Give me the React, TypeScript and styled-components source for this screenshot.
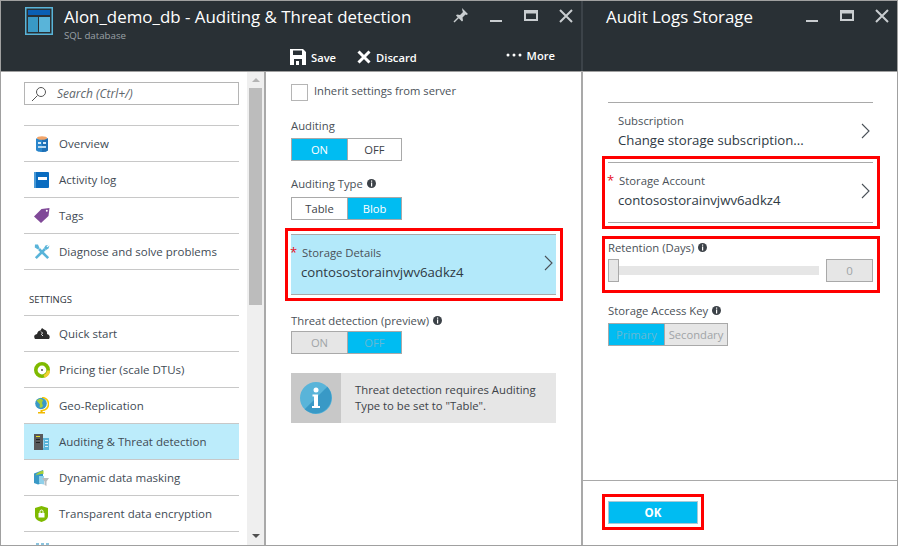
import styled, { createGlobalStyle } from "styled-components"
import type { ReactNode } from "react"

const Global = createGlobalStyle`
html, body { margin: 0; padding: 0; background: #fff; }
* { box-sizing: border-box; }
body { font-family: "Open Sans", "Noto Sans", sans-serif; color: #3c4248; }
`

function SqlIcon() {
  return (
    <svg width="12" height="16" viewBox="0 0 12 16">
      <path d="M0 2.500h12v11.500c0 1-3 2-6 2s-6-1-6-2z" fill="#2a86cc" />
      <path d="M6 2.500h6v11.500c0 1-3 2-6 2z" fill="#1e6fb5" />
      <ellipse cx="6" cy="2" rx="5" ry="1.800" fill="#f2a468" />
      <rect x="2" y="6" width="3" height="2" fill="#d5e8f6" />
      <rect x="7" y="6" width="3" height="2" fill="#d5e8f6" />
      <rect x="2" y="10" width="8" height="2" fill="#b8d8ef" />
    </svg>
  )
}
function LogIcon() {
  return (
    <svg width="15" height="16" viewBox="0 0 15 16">
      <rect width="15" height="16" rx="1" fill="#0a6cc0" />
      <rect width="2" height="16" fill="#4a9ad6" />
      <rect x="4" y="5" width="9" height="3" fill="#fff" />
    </svg>
  )
}
function TagIcon() {
  return (
    <svg width="16" height="15" viewBox="0 0 16 15">
      <path d="M0 8.500 7.500 1 15.500 0 14.500 8 7 15z" fill="#804998" />
      <circle cx="12.800" cy="2.700" r="1" fill="#fff" />
    </svg>
  )
}
function ToolsIcon() {
  return (
    <svg width="16" height="16" viewBox="0 0 16 16">
      <path d="M1.800 14.200 11 5" stroke="#59b4d9" strokeWidth="2.600" />
      <path d="M14.500 0.800 11.500 1.500 10 4l2 2 2.500-1.500 1-3-2 1.800-1-1z" fill="#59b4d9" />
      <path d="M14.200 14.200 5 5" stroke="#59b4d9" strokeWidth="2.600" />
      <path d="M1 0.500 4 0.500 5.500 4 4 5.500 0.800 3.500z" fill="#59b4d9" />
    </svg>
  )
}
function CloudIcon() {
  return (
    <svg width="16" height="11" viewBox="0 0 16 11">
      <path d="M1 11C-0.500 9 0 6.500 3 6 3.500 3.500 5 2.500 6.500 2.500L8 0l2 1.500L12 2.500c1 1 1.200 2.500 1 3.500 2.500 0.500 3.500 3 2 5z" fill="#2b2b2b" />
      <path d="M7 3.500 8.500 5 7.500 6.500 9 8" stroke="#fff" strokeWidth="0.900" fill="none" />
    </svg>
  )
}
function PricingIcon() {
  return (
    <svg width="16" height="16" viewBox="0 0 16 16">
      <circle cx="8" cy="8" r="6.200" fill="#fff" stroke="#7fba00" strokeWidth="3.600" />
      <path d="M14.500 8.500A6.500 6.500 0 0 1 10 14.200" fill="none" stroke="#f0d030" strokeWidth="3.200" />
      <circle cx="8" cy="8" r="1" fill="#555" />
    </svg>
  )
}
function GlobeIcon() {
  return (
    <svg width="15" height="17" viewBox="0 0 15 17">
      <path d="M8 0.500a6.500 6.500 0 0 1 0 13" fill="none" stroke="#f8c800" strokeWidth="1.500" />
      <circle cx="7" cy="6.500" r="5.800" fill="#3999c6" />
      <path d="M2.500 3.500 6 1.500 9 3 8 6l1 3-2 2-1.500-1L6 7.500z" fill="#a5ce3a" />
      <rect x="6.500" y="13" width="2" height="2" fill="#f0b800" />
      <rect x="4" y="15" width="7" height="1.500" fill="#f0b800" />
    </svg>
  )
}
function AuditIcon() {
  return (
    <svg width="15" height="16" viewBox="0 0 15 16">
      <rect x="6" y="4" width="9" height="12" fill="#59b4d9" />
      <rect width="9" height="16" fill="#58595b" />
      <rect x="2" y="2" width="4" height="1" fill="#e8e020" />
      <rect x="2" y="5" width="4" height="1" fill="#222" />
      <rect x="2" y="8" width="4" height="1" fill="#222" />
      <rect x="9" y="6" width="1" height="8" fill="#8fd0ea" />
      <rect x="11" y="6" width="3" height="1" fill="#d8f0fa" />
      <rect x="11" y="9" width="3" height="1" fill="#d8f0fa" />
      <rect x="11" y="12" width="3" height="1" fill="#d8f0fa" />
    </svg>
  )
}
function MaskIcon() {
  return (
    <svg width="15" height="16" viewBox="0 0 15 16">
      <path d="M0 3.500 9 0v13l-5 1.500L0 13z" fill="#3999c6" />
      <path d="M1.500 5.500C3 3 5.500 1.500 9.500 0.500v3.500C6 4 3.500 4.500 1.500 5.500z" fill="#a5ce3a" />
      <path d="M5 6h5v8.500l-5-1z" fill="#8fd0ea" />
      <path d="M8 8h7l-2.500 3.500V16L10.500 15V11.500z" fill="#b8bcbf" />
    </svg>
  )
}
function ShieldIcon() {
  return (
    <svg width="13" height="16" viewBox="0 0 13 16">
      <path d="M0 2 6.500 0 13 2v8c0 3-3 5-6.500 6C3 15 0 13 0 10z" fill="#7fba00" />
      <rect x="3.500" y="7" width="6" height="4.500" fill="#fff" />
      <path d="M5 7V5.500a1.500 1.500 0 0 1 3 0V7" fill="none" stroke="#fff" />
    </svg>
  )
}
function MoreIcon() {
  return (
    <svg width="14" height="14" viewBox="0 0 14 14">
      <rect x="1" y="0" width="3" height="2" fill="#8cc4de" />
      <rect x="6" y="0" width="3" height="2" fill="#8cc4de" />
      <rect x="11" y="0" width="3" height="2" fill="#8cc4de" />
    </svg>
  )
}

type MenuEntry = { label: string; icon: ReactNode; active?: boolean }

const topItems: MenuEntry[] = [
  { label: "Overview", icon: <SqlIcon /> },
  { label: "Activity log", icon: <LogIcon /> },
  { label: "Tags", icon: <TagIcon /> },
  { label: "Diagnose and solve problems", icon: <ToolsIcon /> },
]

const settingsItems: MenuEntry[] = [
  { label: "Quick start", icon: <CloudIcon /> },
  { label: "Pricing tier (scale DTUs)", icon: <PricingIcon /> },
  { label: "Geo-Replication", icon: <GlobeIcon /> },
  { label: "Auditing & Threat detection", icon: <AuditIcon />, active: true },
  { label: "Dynamic data masking", icon: <MaskIcon /> },
  { label: "Transparent data encryption", icon: <ShieldIcon /> },
]

function WindowControls({ pin, inset }: { pin?: boolean; inset: number }) {
  return (
    <Controls $inset={inset}>
      {pin && (
        <svg width="20" height="20" viewBox="0 0 20 20">
          <path d="M11 3l6 6-1.500 1-1-.5-3 3 .5 3-1 1-6-6 1-1 3 .5 3-3-.5-1z" fill="#c9cdd0" />
          <path d="M7.500 12.500 3 17" stroke="#c9cdd0" strokeWidth="1.500" />
        </svg>
      )}
      <svg width="20" height="20" viewBox="0 0 20 20">
        <rect x="4" y="15" width="12" height="2" fill="#c9cdd0" />
      </svg>
      <svg width="20" height="20" viewBox="0 0 20 20">
        <path d="M3 5h14v11H3z M5 8.500v5.500h10V8.500z" fill="#c9cdd0" fillRule="evenodd" />
      </svg>
      <svg width="20" height="20" viewBox="0 0 20 20">
        <path d="M4 5l12 12M16 5 4 17" stroke="#c9cdd0" strokeWidth="2" />
      </svg>
    </Controls>
  )
}

function Chevron() {
  return (
    <ChevronBox>
      <svg width="9" height="16" viewBox="0 0 9 16">
        <path d="M1 1l7 7-7 7" fill="none" stroke="#4a5158" strokeWidth="1.100" />
      </svg>
    </ChevronBox>
  )
}

function InfoDot() {
  return (
    <DotBox>
      <svg width="9" height="9" viewBox="0 0 9 9">
        <circle cx="4.500" cy="4.500" r="4.500" fill="#3c4248" />
        <rect x="4" y="1.500" width="1.200" height="1.200" fill="#fff" />
        <rect x="4" y="3.500" width="1.200" height="4" fill="#fff" />
      </svg>
    </DotBox>
  )
}

function Segmented({ left, right, on, disabled, width, first }: { left: string; right: string; on: "left" | "right"; disabled?: boolean; width: number; first: number }) {
  return (
    <Toggle $width={width} $first={first}>
      <Segment $on={on === "left"} $disabled={disabled}>{left}</Segment>
      <Segment $on={on === "right"} $disabled={disabled}>{right}</Segment>
    </Toggle>
  )
}

function App() {
  return (
    <>
      <Global />
      <Frame>
        <Blade $width={580}>
          <Header>
            <TitleRow>
              <Logo>
                <svg width="28" height="28" viewBox="0 0 28 28">
                  <rect x="0.750" y="0.750" width="26.500" height="26.500" fill="none" stroke="#59b4d9" strokeWidth="1.500" />
                  <rect x="3" y="3" width="22" height="5" fill="#0a5fb4" />
                  <rect x="3" y="10" width="10" height="15" fill="#3999c6" />
                  <rect x="14" y="10" width="11" height="15" fill="#59b4d9" />
                </svg>
              </Logo>
              <TitleText>
                <Title>Alon_demo_db - Auditing &amp; Threat detection</Title>
                <Subtitle>SQL database</Subtitle>
              </TitleText>
              <WindowControls pin inset={5} />
            </TitleRow>
            <Toolbar>
              <ToolButton>
                <svg width="16" height="16" viewBox="0 0 16 16">
                  <path d="M0 0h13l3 3v13H0z M3 1.500V6h9V1.500z M4 10v6h2v-4h3v4h3v-6z" fill="#fff" fillRule="evenodd" />
                </svg>
                Save
              </ToolButton>
              <ToolButton>
                <svg width="14" height="14" viewBox="0 0 14 14">
                  <path d="M1.500 1.500l11 11M12.500 1.500l-11 11" stroke="#fff" strokeWidth="3" />
                </svg>
                Discard
              </ToolButton>
              <MoreButton>
                <svg width="16" height="4" viewBox="0 0 16 4">
                  <circle cx="2" cy="2" r="1.500" fill="#fff" />
                  <circle cx="8" cy="2" r="1.500" fill="#fff" />
                  <circle cx="14" cy="2" r="1.500" fill="#fff" />
                </svg>
                More
              </MoreButton>
            </Toolbar>
          </Header>
          <BladeBody>
            <Menu>
              <SearchBox>
                <svg width="16" height="16" viewBox="0 0 16 16">
                  <circle cx="10" cy="6" r="4.500" fill="none" stroke="#555" />
                  <path d="M6.500 9.500 1 15" stroke="#555" />
                </svg>
                Search (Ctrl+/)
              </SearchBox>
              <MenuList>
                {topItems.map((item) => (
                  <MenuRow key={item.label} $active={item.active}>
                    <MenuIcon>{item.icon}</MenuIcon>
                    {item.label}
                  </MenuRow>
                ))}
              </MenuList>
              <SectionLabel>SETTINGS</SectionLabel>
              <MenuList>
                {settingsItems.map((item) => (
                  <MenuRow key={item.label} $active={item.active}>
                    <MenuIcon>{item.icon}</MenuIcon>
                    {item.label}
                  </MenuRow>
                ))}
                <MenuRow>
                  <MenuIcon><MoreIcon /></MenuIcon>
                </MenuRow>
              </MenuList>
            </Menu>
            <Scrollbar>
              <ScrollArrow $down={false} />
              <ScrollThumb />
              <ScrollArrow $down />
            </Scrollbar>
            <Content>
              <CheckRow>
                <CheckBox />
                <CheckText>Inherit settings from server</CheckText>
              </CheckRow>
              <FieldLabel $top={17} $bottom={4}>Auditing</FieldLabel>
              <Segmented left="ON" right="OFF" on="left" width={111} first={55} />
              <FieldLabel $top={15} $bottom={5}>Auditing Type <InfoDot /></FieldLabel>
              <Segmented left="Table" right="Blob" on="right" width={111} first={55} />
              <RedBox $top={8}>
                <LinkRow $tinted>
                  <LinkText>
                    <LinkLabel><Star>*</Star>Storage Details</LinkLabel>
                    <LinkValue>contosostorainvjwv6adkz4</LinkValue>
                  </LinkText>
                  <Chevron />
                </LinkRow>
              </RedBox>
              <FieldLabel $top={12} $bottom={2}>Threat detection (preview) <InfoDot /></FieldLabel>
              <Segmented left="ON" right="OFF" on="right" disabled width={111} first={55} />
              <InfoBox>
                <InfoIconCell>
                  <svg width="32" height="32" viewBox="0 0 32 32">
                    <circle cx="16" cy="16" r="16" fill="#59b4d9" />
                    <path d="M27.300 4.700A16 16 0 0 1 4.700 27.300z" fill="#3999c6" />
                    <circle cx="16" cy="8" r="2.500" fill="#fff" />
                    <path d="M12.500 12.500H18V24h2v2h-8v-2h2V14.500h-1.500z" fill="#fff" />
                  </svg>
                </InfoIconCell>
                <InfoText>Threat detection requires Auditing Type to be set to "Table".</InfoText>
              </InfoBox>
            </Content>
          </BladeBody>
        </Blade>
        <Divider />
        <Blade $width={314}>
          <Header>
            <TitleRow>
              <PlainTitle>Audit Logs Storage</PlainTitle>
              <WindowControls inset={5} />
            </TitleRow>
          </Header>
          <SideBody>
            <SideMain>
              <LinkRow $open>
                <LinkText>
                  <LinkLabel>Subscription</LinkLabel>
                  <LinkValue>Change storage subscription...</LinkValue>
                </LinkText>
                <Chevron />
              </LinkRow>
              <RedBox $top={0}>
                <LinkRow>
                  <LinkText>
                    <LinkLabel><Star>*</Star>Storage Account</LinkLabel>
                    <LinkValue>contosostorainvjwv6adkz4</LinkValue>
                  </LinkText>
                  <Chevron />
                </LinkRow>
              </RedBox>
              <RedBox $top={7}>
                <RetentionLabel>Retention (Days) <InfoDot /></RetentionLabel>
                <SliderRow>
                  <SliderTrack>
                    <SliderThumb />
                  </SliderTrack>
                  <SliderValue>0</SliderValue>
                </SliderRow>
              </RedBox>
              <FieldLabel $top={10} $bottom={4}>Storage Access Key <InfoDot /></FieldLabel>
              <Segmented left="Primary" right="Secondary" on="left" disabled width={120} first={55} />
            </SideMain>
            <Footer>
              <OkBox>
                <OkButton>OK</OkButton>
              </OkBox>
            </Footer>
          </SideBody>
        </Blade>
      </Frame>
    </>
  )
}

export default App

const Frame = styled.div`
  width: 898px;
  height: 546px;
  border: 1px solid #a0a0a0;
  display: flex;
  overflow: hidden;
`

const Blade = styled.section<{ $width: number }>`
  width: ${(p) => p.$width}px;
  flex: none;
  display: flex;
  flex-direction: column;
  height: 100%;
`

const Divider = styled.div`
  width: 2px;
  flex: none;
  background: linear-gradient(#3c4349 0, #3c4349 70px, #a9a9a9 70px);
`

const Header = styled.header`
  height: 71px;
  flex: none;
  background: #293035;
  border-bottom: 1px solid #a0a0a0;
  color: #fff;
`

const TitleRow = styled.div`
  display: flex;
  align-items: flex-start;
  height: 43px;
`

const Logo = styled.div`
  margin: 6px 11px 0 24px;
  height: 28px;
`

const TitleText = styled.div`
  flex: 1;
  min-width: 0;
`

const Title = styled.div`
  font-size: 16.9px;
  line-height: 24px;
  margin-top: 4px;
  white-space: nowrap;
`

const PlainTitle = styled(Title)`
  flex: 1;
  margin-left: 23px;
`

const Subtitle = styled.div`
  font-size: 9.7px;
  line-height: 12px;
  color: #9aa0a5;
  margin-top: 1px;
`

const Controls = styled.div<{ $inset: number }>`
  display: flex;
  gap: 15px;
  margin-top: 4px;
  padding-right: ${(p) => p.$inset}px;
`

const Toolbar = styled.div`
  display: flex;
  align-items: center;
  height: 26px;
  padding-left: 289px;
  font-size: 11.2px;
  font-weight: 600;
`

const ToolButton = styled.div`
  display: flex;
  align-items: center;
  gap: 5px;
  margin-right: 21px;
`

const MoreButton = styled.div`
  display: flex;
  align-items: center;
  gap: 5px;
  margin-left: auto;
  margin-right: 26px;
  margin-top: -4px;
`

const BladeBody = styled.div`
  flex: 1;
  min-height: 0;
  display: flex;
`

const Menu = styled.nav`
  width: 246px;
  flex: none;
  padding: 10px 8px 0 23px;
  overflow: hidden;
`

const SearchBox = styled.div`
  height: 23px;
  border: 1px solid #b5b5b5;
  display: flex;
  align-items: center;
  gap: 10px;
  padding-left: 6px;
  font-size: 12px;
  font-style: italic;
  color: #60666b;
`

const MenuList = styled.div`
  margin-top: 20px;
  border-top: 1px solid #c8c8c8;
`

const MenuRow = styled.div<{ $active?: boolean }>`
  height: 36px;
  display: flex;
  align-items: center;
  border-bottom: 1px solid #c8c8c8;
  background: ${(p) => (p.$active ? "#bcecfb" : "transparent")};
  font-size: 11.5px;
  color: #3f4b55;
  white-space: nowrap;
`

const MenuIcon = styled.span`
  width: 35px;
  flex: none;
  display: flex;
  justify-content: center;
`

const SectionLabel = styled.div`
  font-size: 9.5px;
  line-height: 14px;
  margin: 23px 0 0 5px;
  color: #30363b;

  & + div {
    margin-top: 8px;
  }
`

const Scrollbar = styled.div`
  width: 17px;
  flex: none;
  background: #efefef;
  display: flex;
  flex-direction: column;
  align-items: center;
  justify-content: space-between;
`

const ScrollThumb = styled.div`
  width: 13px;
  height: 217px;
  background: #bcbcbc;
  margin-bottom: auto;
`

const ScrollArrow = styled.div<{ $down: boolean }>`
  width: 0;
  height: 0;
  flex: none;
  border-left: 4px solid transparent;
  border-right: 4px solid transparent;
  border-bottom: ${(p) => (p.$down ? "none" : "4px solid #b4b4b4")};
  border-top: ${(p) => (p.$down ? "4px solid #505050" : "none")};
  margin: ${(p) => (p.$down ? "0 0 7px" : "6px 0 6px")};
`

const Content = styled.div`
  flex: 1;
  min-width: 0;
  border-left: 2px solid #a9a9a9;
  padding: 12px 25px 0 25px;
`

const CheckRow = styled.div`
  display: flex;
  align-items: center;
  gap: 6px;
  font-size: 11.2px;
  color: #4a5158;
`

const CheckText = styled.span`
  margin-top: -4px;
`

const CheckBox = styled.span`
  width: 17px;
  height: 17px;
  border: 1px solid #b5b5b5;
`

const FieldLabel = styled.div<{ $top: number; $bottom: number }>`
  display: flex;
  align-items: center;
  height: 16px;
  padding-bottom: 2px;
  margin: ${(p) => p.$top}px 0 ${(p) => p.$bottom}px;
  font-size: 11.3px;
  color: #4a5158;
  white-space: pre;
`

const DotBox = styled.span`
  display: inline-flex;
  margin-left: 1px;
`

const Toggle = styled.div<{ $width: number; $first: number }>`
  width: ${(p) => p.$width}px;
  height: 23px;
  display: grid;
  grid-template-columns: ${(p) => p.$first}px 1fr;
  border: 1px solid #a9a9a9;
`

const Segment = styled.div<{ $on: boolean; $disabled?: boolean }>`
  display: flex;
  align-items: center;
  justify-content: center;
  font-size: 11.2px;
  background: ${(p) => (p.$on ? "#00bcf2" : p.$disabled ? "#e6e6e6" : "#fff")};
  color: ${(p) => (p.$disabled ? (p.$on ? "#66b8d2" : "#a0a4a7") : p.$on ? "#fff" : "#3c4248")};
  & + & {
    border-left: 1px solid #a9a9a9;
  }
`

const RedBox = styled.div<{ $top: number }>`
  margin: ${(p) => p.$top}px -7px 0 -6px;
  padding: 3px 4px 3px 3px;
  border: 3px solid #f00;
`

const LinkRow = styled.div<{ $tinted?: boolean; $open?: boolean }>`
  height: ${(p) => (p.$open ? "54px" : "61px")};
  display: flex;
  align-items: center;
  border-top: 1px solid #a9a9a9;
  border-bottom: ${(p) => (p.$open ? "none" : "1px solid #a9a9a9")};
  background: ${(p) => (p.$tinted ? "#b3e9fa" : "transparent")};
  padding: ${(p) => (p.$open ? "4px 3px 0 10px" : "0 3px 2px 10px")};
`

const LinkText = styled.div`
  flex: 1;
  min-width: 0;
`

const LinkLabel = styled.div`
  font-size: 11.3px;
  line-height: 16px;
  color: #4a5158;
`

const LinkValue = styled.div`
  font-size: 13.2px;
  line-height: 20px;
  margin-top: 1px;
  color: #2f3a44;
  white-space: nowrap;
`

const Star = styled.span`
  display: inline-block;
  width: 12px;
  margin-left: -11px;
  color: #e81123;
  font-size: 13px;
  line-height: 10px;
`

const ChevronBox = styled.span`
  display: flex;
  flex: none;
  margin-top: -2px;
`

const InfoBox = styled.div`
  display: flex;
  height: 50px;
  margin-top: 19px;
  background: #e6e6e6;
`

const InfoIconCell = styled.div`
  width: 50px;
  flex: none;
  background: #c8c8c8;
  display: flex;
  align-items: center;
  justify-content: center;
`

const InfoText = styled.div`
  padding: 0 14px;
  align-self: center;
  font-size: 11.3px;
  line-height: 16px;
  color: #3c4248;
`

const SideBody = styled.div`
  flex: 1;
  min-height: 0;
  display: flex;
  flex-direction: column;
`

const SideMain = styled.div`
  flex: 1;
  padding: 30px 24px 0 25px;
`

const RetentionLabel = styled.div`
  display: flex;
  align-items: center;
  height: 16px;
  margin-top: -3px;
  font-size: 11.3px;
  color: #4a5158;
  white-space: pre;
`

const SliderRow = styled.div`
  display: flex;
  align-items: center;
  gap: 7px;
  margin: 4px 0 5px;
`

const SliderTrack = styled.div`
  flex: 1;
  height: 9px;
  background: #e6e6e6;
  display: flex;
  align-items: center;
`

const SliderThumb = styled.div`
  width: 11px;
  height: 23px;
  flex: none;
  background: #e6e6e6;
  border: 1px solid #a9a9a9;
`

const SliderValue = styled.div`
  width: 47px;
  height: 23px;
  flex: none;
  display: flex;
  align-items: center;
  justify-content: center;
  background: #e6e6e6;
  border: 1px solid #a9a9a9;
  font-size: 11.5px;
  color: #a0a4a7;
`

const Footer = styled.footer`
  height: 65px;
  flex: none;
  border-top: 1px solid #a9a9a9;
  padding: 13px 0 0 19px;
`

const OkBox = styled.div`
  width: 102px;
  padding: 4px 3px 3px;
  border: 3px solid #f00;
`

const OkButton = styled.div`
  height: 23px;
  display: flex;
  align-items: center;
  justify-content: center;
  background: #00bcf2;
  border: 1px solid #a9c9d6;
  color: #fff;
  font-size: 11.5px;
  font-weight: 700;
`
